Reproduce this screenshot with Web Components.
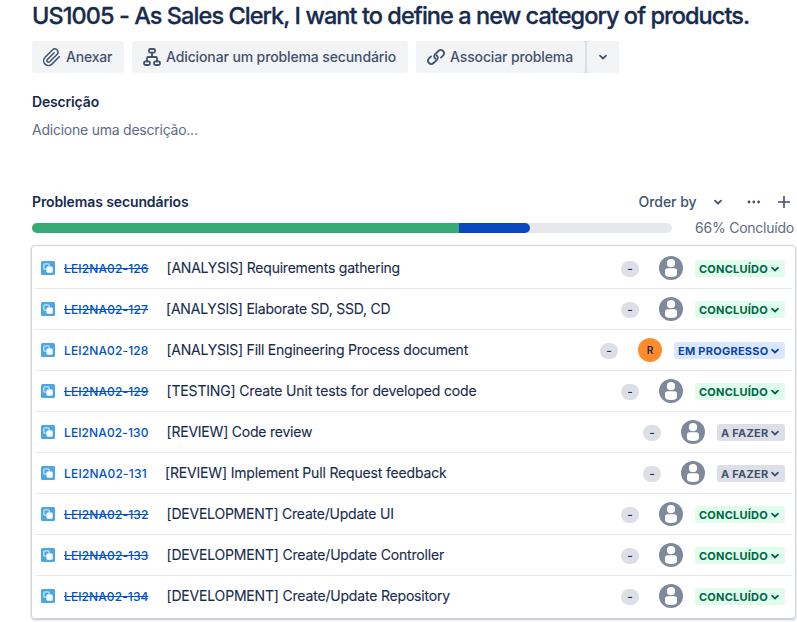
<!DOCTYPE html>
<html lang="pt"><head><meta charset="utf-8"><title>US1005</title>
<style>
body{margin:0;background:#fff;font-family:Inter,"Liberation Sans",sans-serif;color:#172B4D;overflow:hidden}
</style></head><body>
<issue-view></issue-view>
<script>
const define=(name,html,init)=>customElements.define(name,class extends HTMLElement{
  connectedCallback(){
    if(this.shadowRoot)return;
    const t=document.createElement('template');
    t.innerHTML=typeof html==='function'?html(this):html;
    this.attachShadow({mode:'open'}).append(t.content.cloneNode(true));
    if(init)init(this);
  }
});

// A single line of text, tracked so that it fills the advance width in "w".
define('fit-text','<style>:host{display:block;white-space:nowrap;flex:none}span{display:inline-block;text-decoration:inherit}</style><span><slot></slot></span>',el=>{
  const w=+el.getAttribute('w');
  const s=el.shadowRoot.querySelector('span');
  const natural=s.getBoundingClientRect().width;
  s.style.letterSpacing=((w-natural)/el.textContent.length)+'px';
  el.style.width=w+'px';
});

const icons={
  clip:[20,20,'<path transform="translate(.1 .9) scale(.8)" d="m21.440 11.050-9.190 9.190a6 6 0 0 1-8.490-8.490l9.190-9.190a4 4 0 0 1 5.660 5.660l-9.200 9.190a2 2 0 0 1-2.830-2.830l8.490-8.480"/>'],
  tree:[20,20,'<rect x="7" y="2" width="6" height="3.600" rx="1.300"/><rect x="2" y="14.400" width="6" height="3.600" rx="1.500"/><rect x="12" y="14.400" width="6" height="3.600" rx="1.500"/><path d="M10 5.600V10M5 14.400V11.200a1.200 1.200 0 0 1 1.200-1.200h7.600a1.200 1.200 0 0 1 1.200 1.200v3.200"/>'],
  link:[20,20,'<path d="M9.300 11.700a3.300 3.300 0 0 1-.1-4.500l3.200-3.200a3.300 3.300 0 0 1 4.600 0 3.300 3.300 0 0 1 0 4.600l-2 2"/><path d="M10.700 8.300a3.300 3.300 0 0 1 .1 4.500l-3.200 3.200a3.300 3.300 0 0 1-4.600 0 3.300 3.300 0 0 1 0-4.600l2-2"/>'],
  chev:[10,10,'<path d="m2 3.700 3 2.800 3-2.800"/>'],
  dots:[14,4,'<g fill="currentColor" stroke="none"><circle cx="2" cy="2" r="1.400"/><circle cx="6.800" cy="2" r="1.400"/><circle cx="11.600" cy="2" r="1.400"/></g>'],
  plus:[12,12,'<path d="M6 .5v11M.5 6h11"/>'],
  subtask:[14,14,'<rect width="14" height="14" rx="1.500" fill="#4BA6E2" stroke="none"/><rect x="2.800" y="2.800" width="5.400" height="5.400" rx="1.200" fill="none" stroke="#c4e4f8" stroke-width="1.300"/><rect x="5.500" y="5.500" width="6.200" height="6.200" rx="1.300" fill="#fff" stroke="none"/>'],
  person:[24,24,'<g stroke="none"><circle cx="12" cy="12" r="12" fill="#7F899C"/><g fill="#fff"><circle cx="12" cy="7.200" r="4.100"/><path d="M6 14.800a2.600 2.600 0 0 1 2.600-2.600h6.800a2.600 2.600 0 0 1 2.600 2.600v3.300q0 2.900-6 2.900t-6-2.900z"/></g></g>']
};
define('ui-icon',el=>{
  const [w,h,d]=icons[el.getAttribute('name')];
  return `<style>:host{display:block;flex:none;width:${w}px;height:${h}px}svg{display:block}</style><svg width="${w}" height="${h}" viewBox="0 0 ${w} ${h}" fill="none" stroke="currentColor" stroke-width="${el.getAttribute('stroke')||1.8}" stroke-linecap="round" stroke-linejoin="round">${d}</svg>`;
});

define('ui-button',`<style>:host{display:flex;align-items:center;box-sizing:border-box;height:32px;background:#F3F4F6;border-radius:3px;color:#42526E;font-weight:500;font-size:14px;line-height:20px;padding:0 0 0 10px;gap:4px}</style><slot></slot>`);

define('user-avatar',el=>el.hasAttribute('initial')
  ?`<style>:host{display:block;width:24px;height:24px;border-radius:50%;background:#FF8B2B;color:#172B4D;font-size:10px;font-weight:600;line-height:24px;text-align:center}</style>${el.getAttribute('initial')}`
  :`<style>:host{display:block}</style><ui-icon name="person"></ui-icon>`);

const states={
  done:['CONCLUÍDO',69,'#DFFCEC','#006644',90],
  prog:['EM PROGRESSO',90.5,'#DAE7FF','#0747A6',111],
  todo:['A FAZER',47.5,'#DCDFE5','#42526E',68]
};
define('status-lozenge',el=>{
  const [t,w,bg,fg,box]=states[el.getAttribute('state')];
  return `<style>:host{box-sizing:border-box;display:flex;align-items:center;justify-content:space-between;width:${box}px;height:17px;padding:1px 5px 0 4px;border-radius:3px;background:${bg};color:${fg};font-size:11px;font-weight:700;line-height:16px}</style><fit-text w="${w}">${t}</fit-text><ui-icon name="chev"></ui-icon>`;
});

define('issue-row',el=>{
  const a=n=>el.getAttribute(n), s=a('state');
  return `<style>
  :host{display:flex;align-items:center;height:40px;padding:0 8px 0 7px;border-bottom:1px solid #E6E8EC;border-radius:3px}
  :host(:last-child){border-bottom-color:transparent}
  .key{margin-left:9px;margin-right:18px;font-size:12px;font-weight:500;color:#0052CC;line-height:20px;padding-top:1px;text-decoration:${s==='done'?'line-through':'none'}}
  .sum{font-size:14px;line-height:20px;-webkit-text-stroke:.1px}
  .pill{margin-left:auto;margin-right:20px;width:18px;height:16px;border-radius:8px;background:#DCDFE5;font-size:12px;font-weight:500;line-height:15px;text-align:center;position:relative;top:1px}
  user-avatar{margin-right:12px}
  status-lozenge{margin-top:1px}
  </style>
  <ui-icon name="subtask"></ui-icon><fit-text class="key" w="${a('kw')}">${a('key')}</fit-text><fit-text class="sum" w="${a('sw')}">${a('summary')}</fit-text>
  <span class="pill">-</span><user-avatar ${a('initial')?`initial="${a('initial')}"`:''}></user-avatar><status-lozenge state="${s}"></status-lozenge>`;
});

const rows=[
 [126,84.5,'[ANALYSIS] Requirements gathering',233.5,'done'],
 [127,84,'[ANALYSIS] Elaborate SD, SSD, CD',224.5,'done'],
 [128,84.5,'[ANALYSIS] Fill Engineering Process document',301.5,'prog','R'],
 [129,84.5,'[TESTING] Create Unit tests for developed code',310,'done'],
 [130,84.5,'[REVIEW] Code review',145.7,'todo'],
 [131,83,'[REVIEW] Implement Pull Request feedback',281.5,'todo'],
 [132,84.5,'[DEVELOPMENT] Create/Update UI',227.2,'done'],
 [133,84.5,'[DEVELOPMENT] Create/Update Controller',277.5,'done'],
 [134,84.5,'[DEVELOPMENT] Create/Update Repository',283.5,'done']];

define('issue-list',()=>`<style>:host{display:block;box-sizing:border-box;width:765px;height:374px;margin-left:-1px;border:1px solid #CFD3DD;border-radius:4px;padding:2px 2px 0;box-shadow:0 1px 2px rgba(9,30,66,.28)}</style>`+
 rows.map(([n,kw,t,sw,s,i])=>`<issue-row key="LEI2NA02-${n}" kw="${kw}" summary="${t}" sw="${sw}" state="${s}" ${i?`initial="${i}"`:''}></issue-row>`).join(''));

define('progress-bar',`<style>:host{display:flex;width:640px;height:10px;border-radius:5px;overflow:hidden;background:#E6E8EC}.a{width:427px;background:#36AB76}.b{width:71px;background:#0747C0;border-radius:0 5px 5px 0}</style><div class="a"></div><div class="b"></div>`);

define('issue-view',`<style>
:host{display:block;padding:2px 0 0 32px;width:765px;height:620px}
h1,h2,p{margin:0}
h1{font-size:23.5px;font-weight:500;line-height:28px;-webkit-text-stroke:.3px #172B4D}
.tools{display:flex;gap:8px;margin-top:11px}
.split{display:flex;gap:2px;background:#DCDFE5;border-radius:3px}
h2{font-size:14px;font-weight:600;line-height:20px}
.desc{margin-top:19px}
p{margin-top:8px;font-size:14px;line-height:20px;color:#5E6C84}
.head{display:flex;align-items:center;margin-top:52px;color:#42526E}
.order{margin-left:auto;font-size:14px;font-weight:500;line-height:20px}
.prog{display:flex;align-items:center;height:20px;margin-top:6px;font-size:14px;color:#5E6C84;line-height:20px}
.prog fit-text{margin-left:23px}
issue-list{margin-top:7px}
</style>
<h1><fit-text w="717.200">US1005 - As Sales Clerk, I want to define a new category of products.</fit-text></h1>
<div class="tools">
 <ui-button style="width:92px"><ui-icon name="clip" stroke="1.900"></ui-icon><fit-text w="46.200">Anexar</fit-text></ui-button>
 <ui-button style="width:276px"><ui-icon name="tree"></ui-icon><fit-text w="230">Adicionar um problema secundário</fit-text></ui-button>
 <div class="split"><ui-button style="width:169px"><ui-icon name="link"></ui-icon><fit-text w="123">Associar problema</fit-text></ui-button><ui-button style="width:32px;padding-left:11px"><ui-icon name="chev"></ui-icon></ui-button></div>
</div>
<div class="desc"><h2><fit-text w="67">Descrição</fit-text></h2><p><fit-text w="165.700">Adicione uma descrição...</fit-text></p></div>
<div class="head"><h2 style="color:#172B4D"><fit-text w="156.500">Problemas secundários</fit-text></h2><fit-text class="order" w="58">Order by</fit-text><ui-icon name="chev" style="margin-left:16.500px"></ui-icon><ui-icon name="dots" style="margin-left:24px"></ui-icon><ui-icon name="plus" stroke="1.600" style="margin-left:17px;margin-right:7px"></ui-icon></div>
<div class="prog"><progress-bar></progress-bar><fit-text w="99">66% Concluído</fit-text></div>
<issue-list></issue-list>`);
</script></body></html>
